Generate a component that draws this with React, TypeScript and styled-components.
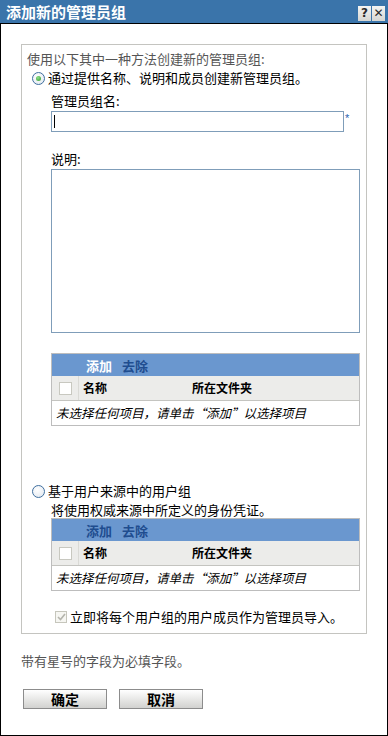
import React from "react";
import styled, { createGlobalStyle } from "styled-components";

const Global = createGlobalStyle`
  html, body {
    margin: 0;
    padding: 0;
    background: #ffffff;
  }
  body {
    font-family: "Noto Sans CJK SC", "Liberation Sans", sans-serif;
    font-size: 13px;
    color: #000000;
  }
`;

const Dialog = styled.div`
  width: 388px;
  height: 736px;
  box-sizing: border-box;
  border: 1px solid #000000;
  border-top: none;
  background: #ffffff;
  display: flex;
  flex-direction: column;
`;

const TitleBar = styled.div`
  height: 24px;
  margin: 0 -1px;
  box-sizing: border-box;
  background: #3a74aa;
  border-bottom: 1px solid #000000;
  display: flex;
  align-items: flex-start;
  justify-content: space-between;
  padding: 0 3px 0 6px;
`;

const Title = styled.h1`
  margin: 3px 0 0;
  font-size: 15px;
  line-height: 17px;
  font-weight: bold;
  color: #ffffff;
`;

const TitleButtons = styled.div`
  display: flex;
  gap: 1px;
  margin-top: 6px;
`;

const TitleButton = styled.span`
  width: 13px;
  height: 15px;
  background: linear-gradient(#f4f4f2, #d6d6d2);
  color: #2a2a2a;
  font-family: "DejaVu Sans", sans-serif;
  font-weight: bold;
  font-size: 12px;
  line-height: 15px;
  text-align: center;
`;

const Fieldset = styled.div`
  margin: 20px 20px 0;
  border: 1px solid #c4c4c0;
  padding: 0 0 8px;
`;

const Intro = styled.div`
  margin: 6px 0 0 5px;
  height: 16px;
  line-height: 16px;
  color: #555555;
`;

const RadioRow = styled.label<{ $top: number }>`
  display: flex;
  align-items: center;
  height: 16px;
  margin: ${(p) => p.$top}px 0 0 10px;
  line-height: 16px;
  color: #000000;
`;

const Radio = styled.span<{ $on?: boolean }>`
  width: 11px;
  height: 11px;
  border-radius: 50%;
  border: 1px solid #3f6f9f;
  background: radial-gradient(circle at 40% 35%, #ffffff, #dfe6ee);
  margin-right: 3px;
  display: flex;
  align-items: center;
  justify-content: center;
  &::after {
    content: "";
    display: ${(p) => (p.$on ? "block" : "none")};
    width: 5px;
    height: 5px;
    border-radius: 50%;
    background: radial-gradient(circle at 40% 35%, #8ee08a, #2f9a2c);
  }
`;

const Indented = styled.div`
  padding-left: 29px;
`;

const FieldLabel = styled.div<{ $top: number }>`
  margin-top: ${(p) => p.$top}px;
  height: 16px;
  line-height: 16px;
  color: #000000;
`;

const InputRow = styled.div`
  display: flex;
  align-items: flex-start;
  margin-top: 2px;
`;

const TextInput = styled.div`
  width: 293px;
  height: 21px;
  box-sizing: border-box;
  border: 1px solid #7f9db9;
  position: relative;
  &::after {
    content: "";
    position: absolute;
    left: 2px;
    top: 3px;
    width: 1px;
    height: 13px;
    background: #000000;
  }
`;

const Required = styled.span`
  color: #2b5fb0;
  font-family: "Liberation Sans", sans-serif;
  font-size: 11px;
  line-height: 14px;
  margin-left: 1px;
`;

const TextArea = styled.div`
  margin-top: 2px;
  width: 309px;
  height: 164px;
  box-sizing: border-box;
  border: 1px solid #7f9db9;
`;

const Table = styled.div<{ $top: number }>`
  margin-top: ${(p) => p.$top}px;
  width: 309px;
  box-sizing: border-box;
  border: 1px solid #bdbdbd;
`;

const Toolbar = styled.div`
  height: 22px;
  background: #6a97cf;
  display: flex;
  align-items: center;
  gap: 10px;
  padding-left: 34px;
`;

const ToolLink = styled.span<{ $active?: boolean }>`
  font-weight: bold;
  font-size: 13px;
  color: ${(p) => (p.$active ? "#ffffff" : "#1f4d8f")};
`;

const HeaderRow = styled.div`
  display: flex;
  height: 24px;
  background: #ececea;
  border-bottom: 1px solid #c4c4c0;
  font-weight: bold;
  font-size: 12px;
`;

const CheckCell = styled.div`
  width: 26px;
  border-right: 1px solid #dadad6;
  display: flex;
  align-items: center;
  justify-content: center;
`;

const Box = styled.span`
  width: 11px;
  height: 11px;
  border: 1px solid #c8c8c0;
  background: #ffffff;
`;

const HeadCell = styled.div<{ $w: number }>`
  width: ${(p) => p.$w}px;
  padding-left: 4px;
  line-height: 24px;
`;

const EmptyRow = styled.div`
  height: 24px;
  line-height: 24px;
  padding-left: 4px;
  font-style: italic;
  font-size: 12.5px;
  color: #000000;
`;

const Note = styled.div`
  margin: 3px 0 0 0;
  height: 16px;
  line-height: 16px;
`;

const CheckRow = styled.div`
  display: flex;
  align-items: center;
  margin: 18px 0 0 33px;
  height: 16px;
  line-height: 16px;
  color: #000000;
`;

const DisabledBox = styled.span`
  width: 12px;
  height: 12px;
  box-sizing: border-box;
  border: 1px solid #c6c6bc;
  background: #f6f6f2;
  margin-right: 3px;
  display: flex;
  align-items: center;
  justify-content: center;
`;

const Footnote = styled.div`
  margin: 19px 0 0 20px;
  height: 16px;
  line-height: 16px;
  color: #555555;
`;

const Buttons = styled.div`
  display: flex;
  gap: 12px;
  margin: 20px 0 0 22px;
`;

const Button = styled.button`
  width: 84px;
  height: 20px;
  box-sizing: border-box;
  border: 1px solid #8c8c8c;
  background: linear-gradient(#ffffff, #e4e4e2 60%, #d2d2d0);
  font-family: "Noto Sans CJK SC", sans-serif;
  font-weight: bold;
  font-size: 14px;
  line-height: 16px;
  color: #000000;
  padding: 0;
`;

const MemberTable = ({ top, addActive }: { top: number; addActive?: boolean }) => (
  <Table $top={top}>
    <Toolbar>
      <ToolLink $active={addActive}>添加</ToolLink>
      <ToolLink>去除</ToolLink>
    </Toolbar>
    <HeaderRow>
      <CheckCell>
        <Box />
      </CheckCell>
      <HeadCell $w={105}>名称</HeadCell>
      <HeadCell $w={150}>所在文件夹</HeadCell>
    </HeaderRow>
    <EmptyRow>未选择任何项目，请单击“添加”以选择项目</EmptyRow>
  </Table>
);

const App = (): JSX.Element => {
  return (
    <>
      <Global />
      <Dialog>
        <TitleBar>
          <Title>添加新的管理员组</Title>
          <TitleButtons>
            <TitleButton>?</TitleButton>
            <TitleButton>✕</TitleButton>
          </TitleButtons>
        </TitleBar>
        <Fieldset>
          <Intro>使用以下其中一种方法创建新的管理员组:</Intro>
          <RadioRow $top={3}>
            <Radio $on />
            通过提供名称、说明和成员创建新管理员组。
          </RadioRow>
          <Indented>
            <FieldLabel $top={7}>管理员组名:</FieldLabel>
            <InputRow>
              <TextInput />
              <Required>*</Required>
            </InputRow>
            <FieldLabel $top={19}>说明:</FieldLabel>
            <TextArea />
            <MemberTable top={20} addActive />
          </Indented>
          <RadioRow $top={57}>
            <Radio />
            基于用户来源中的用户组
          </RadioRow>
          <Indented>
            <Note>将使用权威来源中所定义的身份凭证。</Note>
            <MemberTable top={0} />
          </Indented>
          <CheckRow>
            <DisabledBox>
              <svg width="9" height="8" viewBox="0 0 9 8">
                <path d="M1 4 L3.5 6.5 L8 1" fill="none" stroke="#b4b4ac" strokeWidth="1.6" />
              </svg>
            </DisabledBox>
            立即将每个用户组的用户成员作为管理员导入。
          </CheckRow>
        </Fieldset>
        <Footnote>带有星号的字段为必填字段。</Footnote>
        <Buttons>
          <Button>确定</Button>
          <Button>取消</Button>
        </Buttons>
      </Dialog>
    </>
  );
};

export default App;
